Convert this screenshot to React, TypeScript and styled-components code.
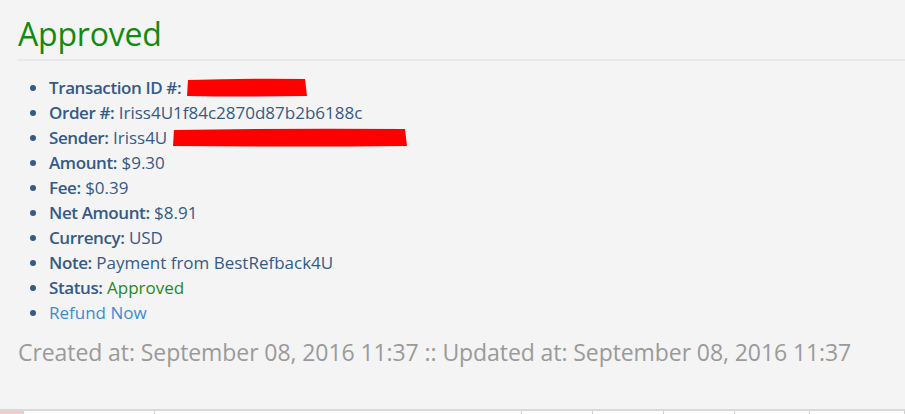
import React from 'react';
import styled, { createGlobalStyle } from 'styled-components';

const GlobalStyle = createGlobalStyle`
  html, body {
    margin: 0;
    padding: 0;
    background: #f4f4f4;
  }
  body {
    font-family: "Open Sans", "Noto Sans", sans-serif;
  }
`;

const Page = styled.div({
  width: 905,
  height: 414,
  display: 'flex',
  flexDirection: 'column',
  background: '#f4f4f4',
  overflow: 'hidden',
});

const Content = styled.div({
  flex: 1,
  padding: '12px 0 0 17px',
});

const Title = styled.h1({
  margin: 0,
  paddingLeft: 1,
  fontSize: 32,
  fontWeight: 400,
  lineHeight: '44px',
  color: '#118a11',
  letterSpacing: -0.2,
  borderBottom: '2px solid #e9e9e9',
  paddingBottom: 3,
});

const Details = styled.ul({
  margin: '14px 0 0',
  padding: '0 0 0 32px',
  listStyle: 'disc',
  color: '#355a86',
  fontSize: 17,
  lineHeight: '25px',
  letterSpacing: 0,
});

const Item = styled.li({
  '::marker': {
    color: '#355a86',
  },
});

const Label = styled.b({
  fontWeight: 600,
  letterSpacing: -0.4,
});

const Value = styled.span<{ tone?: 'green' | 'link' }>(({ tone }) => ({
  color: tone === 'green' ? '#1f8a1f' : tone === 'link' ? '#3a8cd6' : '#355a86',
  cursor: tone === 'link' ? 'pointer' : 'inherit',
}));

const Redacted = styled.svg({
  verticalAlign: 'middle',
  marginTop: -4,
});

const Stamp = styled.div({
  marginTop: 11,
  paddingLeft: 1,
  fontFamily: '"Open Sans", sans-serif',
  fontSize: 23,
  color: '#9a9a9a',
  letterSpacing: -0.08,
});

const Footer = styled.div({
  height: 3,
  borderTop: '2px solid #d8d8d8',
  background: '#fff',
  display: 'grid',
  gridTemplateColumns: '24px 131px 367px 71px 71px 71px 75px 1fr',
});

const FooterCell = styled.div<{ accent?: boolean }>(({ accent }) => ({
  background: accent ? '#f9c8c8' : '#fff',
  borderRight: '1px solid #cfcfcf',
}));

const Blot: React.FC<{ width: number }> = ({ width }) => (
  <Redacted width={width} height={19} viewBox={`0 0 ${width} 19`}>
    <path
      d={`M2 2 Q${width / 2} 0 ${width - 3} 1 L${width - 1} 18 Q${width / 2} 19 1 18 Z`}
      fill="#ff0000"
    />
  </Redacted>
);

const rows: { label: string; value: React.ReactNode }[] = [
  { label: 'Transaction ID #:', value: <Blot width={122} /> },
  { label: 'Order #:', value: 'Iriss4U1f84c2870d87b2b6188c' },
  {
    label: 'Sender:',
    value: (
      <>
        Iriss4U <Blot width={236} />
      </>
    ),
  },
  { label: 'Amount:', value: '$9.30' },
  { label: 'Fee:', value: '$0.39' },
  { label: 'Net Amount:', value: '$8.91' },
  { label: 'Currency:', value: 'USD' },
  { label: 'Note:', value: 'Payment from BestRefback4U' },
];

export default function App() {
  return (
    <Page>
      <GlobalStyle />
      <Content>
        <Title>Approved</Title>
        <Details>
          {rows.map((row) => (
            <Item key={row.label}>
              <Label>{row.label}</Label> <Value>{row.value}</Value>
            </Item>
          ))}
          <Item>
            <Label>Status:</Label> <Value tone="green">Approved</Value>
          </Item>
          <Item>
            <Value tone="link">Refund Now</Value>
          </Item>
        </Details>
        <Stamp>
          Created at: September 08, 2016 11:37 :: Updated at: September 08, 2016 11:37
        </Stamp>
      </Content>
      <Footer>
        <FooterCell accent />
        <FooterCell />
        <FooterCell />
        <FooterCell />
        <FooterCell />
        <FooterCell />
        <FooterCell />
        <FooterCell />
      </Footer>
    </Page>
  );
}
